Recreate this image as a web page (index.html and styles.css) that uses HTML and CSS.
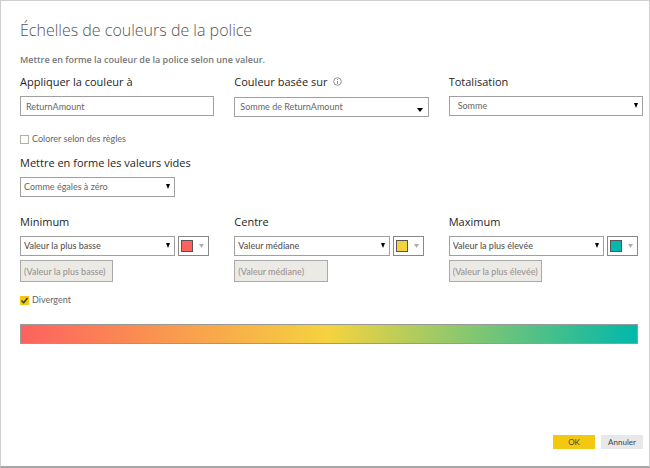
FILE: index.html
```html
<!DOCTYPE html>
<html lang="fr">
<head>
<meta charset="utf-8">
<title>Échelles de couleurs de la police</title>
<link rel="stylesheet" href="styles.css">
</head>
<body>
<form class="dialog">
  <button class="close" type="button" aria-label="Fermer"><svg width="8" height="8" viewBox="0 0 8 8"><path d="M0 0L8 8M8 0L0 8" stroke="currentColor"/></svg></button>
  <h1 class="title">Échelles de couleurs de la police</h1>
  <p class="intro">Mettre en forme la couleur de la police selon une valeur.</p>

  <div class="columns">
    <div class="field">
      <label class="label" for="apply">Appliquer la couleur à</label>
      <input class="control" id="apply" type="text" value="ReturnAmount">
    </div>
    <div class="field">
      <div class="label-row">
        <label class="label" for="based">Couleur basée sur</label>
        <svg class="info" width="9" height="9" viewBox="0 0 9 9"><circle cx="4.5" cy="4.5" r="3.8" fill="none" stroke="#777" stroke-width=".8"/><path d="M4.5 2v1M4.5 4v3" stroke="#777" stroke-width=".8"/></svg>
      </div>
      <div class="select">
        <select class="control" id="based"><option>Somme de ReturnAmount</option></select>
        <svg class="caret caret-low" width="6" height="4" viewBox="0 0 6 4"><path d="M0 0H6L3 4Z"/></svg>
      </div>
    </div>
    <div class="field">
      <label class="label" for="total">Totalisation</label>
      <div class="select">
        <select class="control control-indent" id="total"><option>Somme</option></select>
        <svg class="caret" width="4" height="5" viewBox="0 0 4 5"><path d="M0 0H4L2 5Z"/></svg>
      </div>
    </div>
  </div>

  <label class="check rules"><input type="checkbox"><span>Colorer selon des règles</span></label>

  <div class="columns blanks">
    <div class="field">
      <label class="label" for="blank">Mettre en forme les valeurs vides</label>
      <div class="picker-row">
        <div class="select">
          <select class="control control-tight" id="blank"><option>Comme égales à zéro</option></select>
          <svg class="caret" width="4" height="5" viewBox="0 0 4 5"><path d="M0 0H4L2 5Z"/></svg>
        </div>
        <span class="picker-space"></span>
      </div>
    </div>
  </div>

  <div class="columns bounds">
    <div class="field">
      <label class="label" for="min">Minimum</label>
      <div class="picker-row">
        <div class="select">
          <select class="control control-tight strong" id="min"><option>Valeur la plus basse</option></select>
          <svg class="caret" width="4" height="5" viewBox="0 0 4 5"><path d="M0 0H4L2 5Z"/></svg>
        </div>
        <button class="picker" type="button" aria-label="Couleur du minimum"><span class="swatch red"></span><svg width="5" height="4" viewBox="0 0 5 4"><path d="M0 0H5L2.5 4Z"/></svg></button>
      </div>
      <input class="bound" type="text" aria-label="Valeur minimale" value="(Valeur la plus basse)" disabled>
    </div>
    <div class="field">
      <label class="label" for="mid">Centre</label>
      <div class="picker-row">
        <div class="select">
          <select class="control control-tight strong" id="mid"><option>Valeur médiane</option></select>
          <svg class="caret" width="4" height="5" viewBox="0 0 4 5"><path d="M0 0H4L2 5Z"/></svg>
        </div>
        <button class="picker" type="button" aria-label="Couleur du centre"><span class="swatch yellow"></span><svg width="5" height="4" viewBox="0 0 5 4"><path d="M0 0H5L2.5 4Z"/></svg></button>
      </div>
      <input class="bound" type="text" aria-label="Valeur centrale" value="(Valeur médiane)" disabled>
    </div>
    <div class="field">
      <label class="label" for="max">Maximum</label>
      <div class="picker-row">
        <div class="select">
          <select class="control control-tight strong" id="max"><option>Valeur la plus élevée</option></select>
          <svg class="caret" width="4" height="5" viewBox="0 0 4 5"><path d="M0 0H4L2 5Z"/></svg>
        </div>
        <button class="picker" type="button" aria-label="Couleur du maximum"><span class="swatch teal"></span><svg width="5" height="4" viewBox="0 0 5 4"><path d="M0 0H5L2.5 4Z"/></svg></button>
      </div>
      <input class="bound" type="text" aria-label="Valeur maximale" value="(Valeur la plus élevée)" disabled>
    </div>
  </div>

  <label class="check diverging"><span class="tick"><input type="checkbox" checked><svg width="9" height="9" viewBox="0 0 9 9"><path d="M1.5 4.5L3.7 6.7L7.5 2" fill="none" stroke="#333" stroke-width="1.4"/></svg></span><span>Divergent</span></label>

  <div class="scale"></div>

  <div class="actions">
    <button class="button primary" type="submit">OK</button>
    <button class="button" type="button">Annuler</button>
  </div>
</form>
</body>
</html>
```

FILE: styles.css
```css
* {
  box-sizing: border-box;
}

body {
  margin: 0;
  font-family: Lato, "Open Sans", sans-serif;
  font-size: 9px;
  line-height: 12px;
  color: #666;
  background: #fff;
}

input,
select,
button {
  margin: 0;
  font: inherit;
  color: inherit;
}

.dialog {
  position: relative;
  display: flex;
  flex-direction: column;
  min-height: 100vh;
  padding: 17px 6px 17px 19px;
  border: 1px solid #cfcfcf;
  border-bottom: 2px solid #a6a6a6;
  overflow: hidden;
}

.close {
  position: absolute;
  top: 5px;
  right: -8px;
  display: flex;
  padding: 0;
  border: 0;
  background: none;
}

.title,
.intro,
.label {
  font-family: "Open Sans", sans-serif;
}

.title {
  margin: 0;
  font-size: 16px;
  line-height: 24px;
  font-weight: 300;
  color: #555;
}

.intro {
  margin: 12px 0 8px;
  font-weight: 600;
  color: #777;
}

.columns {
  display: grid;
  grid-template-columns: repeat(3, 1fr);
  gap: 20px;
}

.label {
  display: block;
  margin-bottom: 6px;
  font-size: 11px;
  line-height: 16px;
  color: #252525;
}

.label-row {
  display: flex;
  gap: 6px;
  margin-bottom: 1px;
}

.info {
  margin-top: 3px;
}

.control {
  display: block;
  width: 100%;
  height: 20px;
  padding: 0 5px;
  border: 1px solid #a0a0a0;
  border-radius: 0;
  background: #fff;
  appearance: none;
}

.control-indent {
  padding-left: 8px;
}

.control-tight {
  padding-left: 3px;
}

.strong {
  font-weight: 500;
  color: #555;
}

.select {
  position: relative;
  flex: 1;
}

.caret {
  position: absolute;
  top: 7px;
  right: 5px;
  fill: #000;
  pointer-events: none;
}

.caret-low {
  top: 11px;
  right: 6px;
}

.check {
  display: flex;
  align-items: center;
  align-self: flex-start;
  gap: 3px;
}

.check input {
  display: block;
  width: 9px;
  height: 9px;
  border: 1px solid #b0b0a8;
  background: #fff;
  appearance: none;
}

.check .tick input {
  border: 0;
  background: #f2c811;
}

.tick {
  position: relative;
}

.tick svg {
  position: absolute;
  inset: 0;
}

.rules {
  margin-top: 16px;
}

.blanks {
  margin-top: 10px;
}

.bounds {
  margin-top: 17px;
}

.picker-row {
  display: flex;
  gap: 3px;
}

.picker,
.picker-space {
  width: 31px;
  margin-right: 5px;
}

.picker {
  display: flex;
  align-items: center;
  justify-content: space-between;
  height: 20px;
  padding: 0 4px 0 2px;
  border: 1px solid #888;
  background: #fff;
  fill: #b0b0b0;
}

.swatch {
  width: 12px;
  height: 12px;
  border: 1px solid #555;
}

.red {
  background: #fd625e;
}

.yellow {
  background: #f5d33f;
}

.teal {
  background: #01b8aa;
}

.bound {
  display: block;
  width: 48%;
  height: 22px;
  margin-top: 4px;
  padding: 0 3px;
  border: 1px solid #aaa;
  background: #ebeae4;
  color: #9c9393;
  font-weight: 500;
}

.diverging {
  margin-top: 12px;
}

.scale {
  height: 20px;
  margin: 18px 5px 0 0;
  border: 1px solid #999;
  background: linear-gradient(to right, #fd625e, #f5d33f 50%, #01b8aa);
}

.actions {
  display: flex;
  justify-content: flex-end;
  gap: 6px;
  margin-top: auto;
}

.button {
  width: 42px;
  height: 14px;
  padding: 0;
  border: 0;
  background: #e8e8e8;
  color: #444;
  font-size: 8px;
}

.primary {
  background: #f2c811;
}
```
